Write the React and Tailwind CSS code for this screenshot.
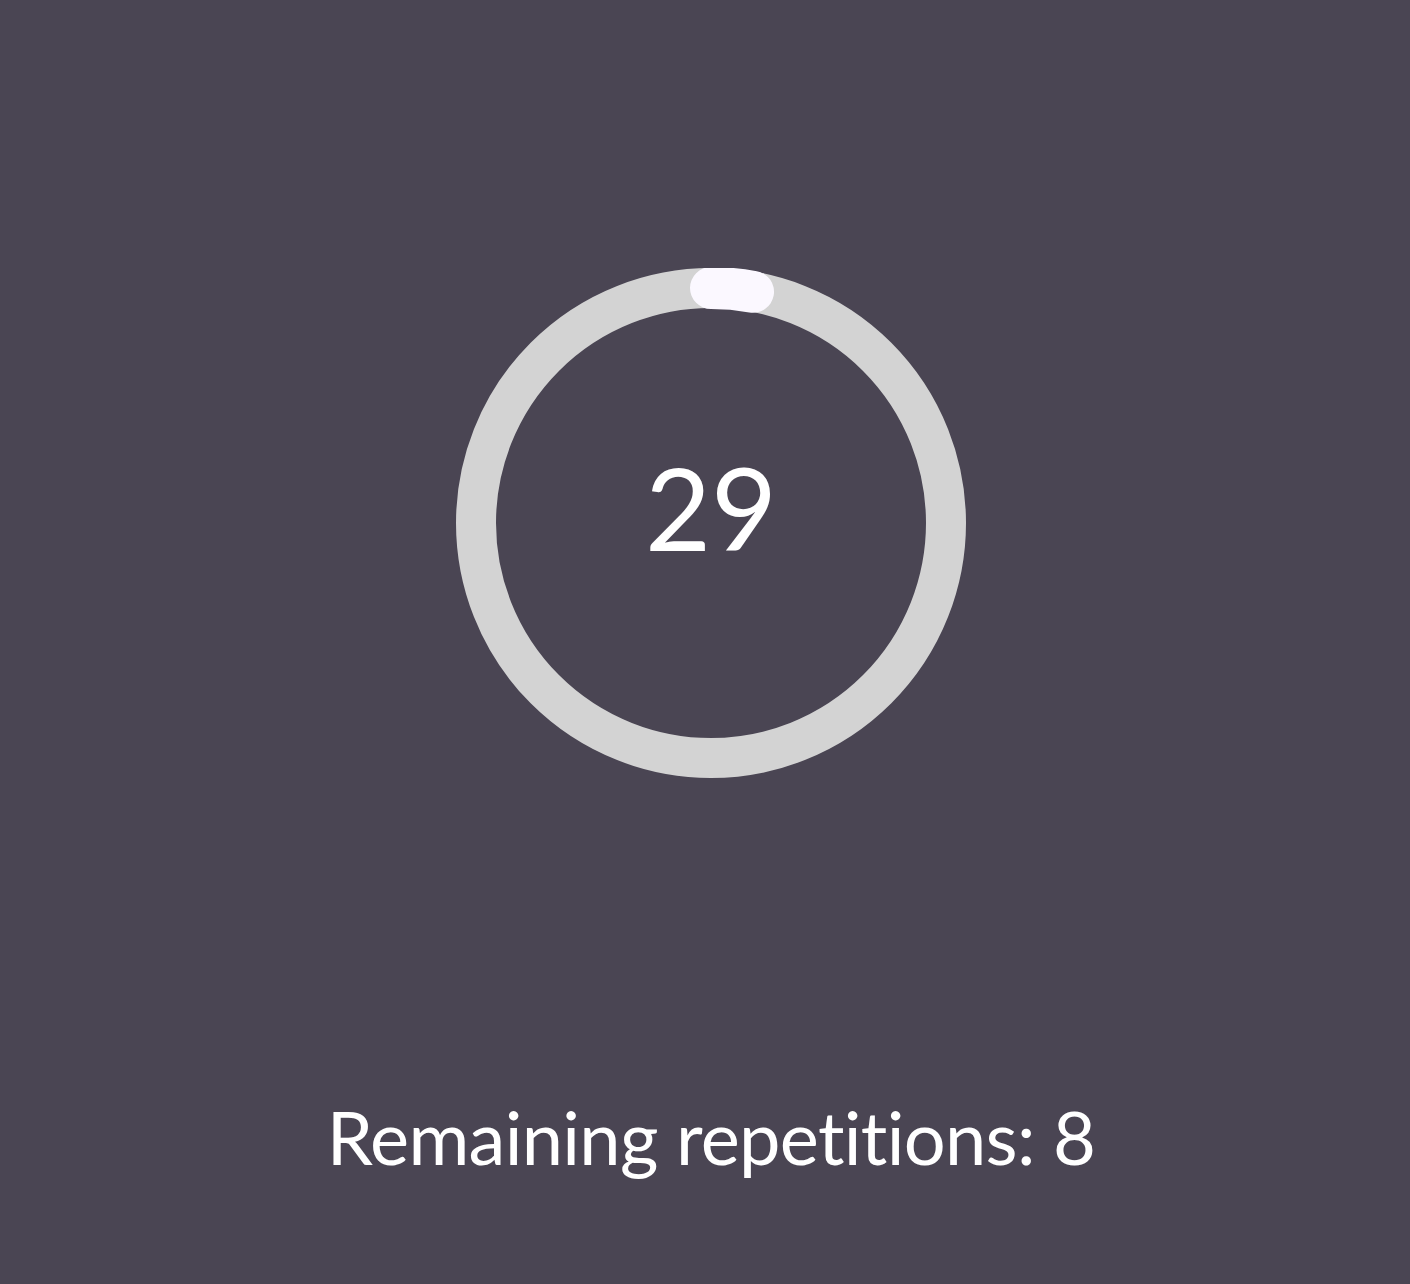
import React from "react";

export default function App() {
  const r = 235;
  const c = 255;
  const a0 = 0;
  const a1 = (10.3 * Math.PI) / 180;
  const x1 = c + r * Math.sin(a0);
  const y1 = c - r * Math.cos(a0);
  const x2 = c + r * Math.sin(a1);
  const y2 = c - r * Math.cos(a1);
  return (
    <div
      className="w-full h-[1284px] bg-[#4a4553] flex flex-col items-center pl-[12px] overflow-hidden [font-variant-ligatures:none]"
      style={{ fontFamily: "Lato, 'Open Sans', sans-serif" }}
    >
      <div className="relative mt-[268px] w-[510px] h-[510px]">
        <svg width="510" height="510" viewBox="0 0 510 510" className="absolute inset-0">
          <circle cx={c} cy={c} r={r} fill="none" stroke="#d3d3d3" strokeWidth="40" />
          <path
            d={`M ${x1} ${y1} A ${r} ${r} 0 0 1 ${x2} ${y2}`}
            fill="none"
            stroke="#fbf8ff"
            strokeWidth="42"
            strokeLinecap="round"
          />
        </svg>
        <div className="absolute inset-0 flex items-center justify-center">
          <span className="text-white text-[114px] leading-none mb-[32px]">29</span>
        </div>
      </div>
      <div className="mt-[322px] text-white text-[74px] leading-none tracking-[-0.7px]">
        Remaining repetitions: 8
      </div>
    </div>
  );
}
